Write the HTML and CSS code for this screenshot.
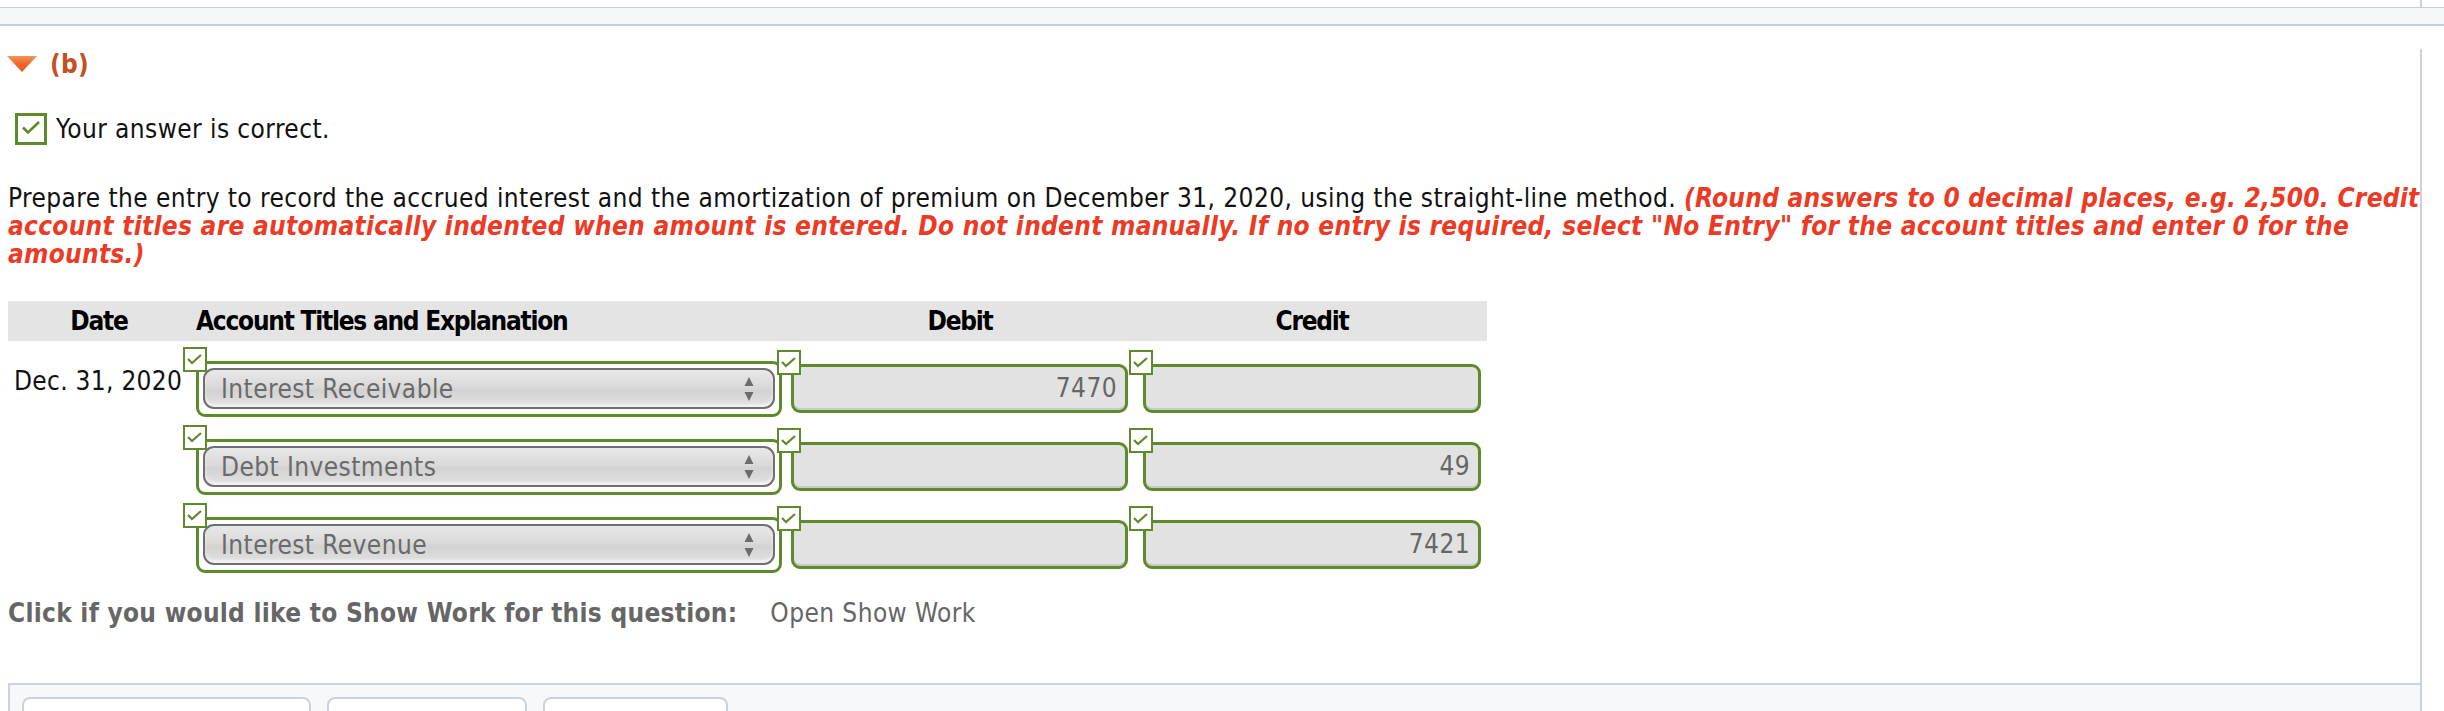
FILE: index.html
```html
<!DOCTYPE html>
<html lang="en">
<head>
<meta charset="utf-8">
<title>Part (b)</title>
<link rel="stylesheet" href="styles.css">
</head>
<body>
<div class="frame-top"></div>
<div class="topbar"></div>
<div class="main">
  <section class="part">
    <h2 class="part-title"><span class="caret"></span><span class="part-label">(b)</span></h2>

    <div class="status">
      <span class="bigcheck"><svg width="26" height="26" viewBox="0 0 26 26"><path d="M5 11.5 L10 16.5 L21 6" fill="none" stroke="#5f8a2b" stroke-width="2.6"/></svg></span>
      <span class="status-text">Your answer is correct.</span>
    </div>

    <p class="prompt">Prepare the entry to record the accrued interest and the amortization of premium on December 31, 2020, using the straight-line method. <em class="note">(Round answers to 0 decimal places, e.g. 2,500. Credit account titles are automatically indented when amount is entered. Do not indent manually. If no entry is required, select "No Entry" for the account titles and enter 0 for the amounts.)</em></p>

    <div class="journal">
      <div class="jhead">
        <div class="h-date">Date</div>
        <div class="h-acct">Account Titles and Explanation</div>
        <div class="h-amt">Debit</div>
        <div class="h-amt h-credit">Credit</div>
      </div>

      <div class="jrow">
        <div class="c-date">Dec. 31, 2020</div>
        <div class="c-acct">
          <span class="tick"><svg width="20" height="21" viewBox="0 0 20 21"><path d="M3 10 L7 14 L16 6" fill="none" stroke="#5f8a2b" stroke-width="2.2"/></svg></span>
          <div class="sel-wrap"><div class="select"><span>Interest Receivable</span><svg class="arrows" width="10" height="26" viewBox="0 0 10 26"><path d="M5 1 L9.5 10 L0.5 10 Z M0.5 16 L9.5 16 L5 25 Z" fill="#6c6c6c"/></svg></div></div>
        </div>
        <div class="c-amt">
          <span class="tick tick-amt"><svg width="20" height="21" viewBox="0 0 20 21"><path d="M3 10 L7 14 L16 6" fill="none" stroke="#5f8a2b" stroke-width="2.2"/></svg></span>
          <div class="amt">7470</div>
        </div>
        <div class="c-amt c-credit">
          <span class="tick tick-amt"><svg width="20" height="21" viewBox="0 0 20 21"><path d="M3 10 L7 14 L16 6" fill="none" stroke="#5f8a2b" stroke-width="2.2"/></svg></span>
          <div class="amt"></div>
        </div>
      </div>

      <div class="jrow">
        <div class="c-date"></div>
        <div class="c-acct">
          <span class="tick"><svg width="20" height="21" viewBox="0 0 20 21"><path d="M3 10 L7 14 L16 6" fill="none" stroke="#5f8a2b" stroke-width="2.2"/></svg></span>
          <div class="sel-wrap"><div class="select"><span>Debt Investments</span><svg class="arrows" width="10" height="26" viewBox="0 0 10 26"><path d="M5 1 L9.5 10 L0.5 10 Z M0.5 16 L9.5 16 L5 25 Z" fill="#6c6c6c"/></svg></div></div>
        </div>
        <div class="c-amt">
          <span class="tick tick-amt"><svg width="20" height="21" viewBox="0 0 20 21"><path d="M3 10 L7 14 L16 6" fill="none" stroke="#5f8a2b" stroke-width="2.2"/></svg></span>
          <div class="amt"></div>
        </div>
        <div class="c-amt c-credit">
          <span class="tick tick-amt"><svg width="20" height="21" viewBox="0 0 20 21"><path d="M3 10 L7 14 L16 6" fill="none" stroke="#5f8a2b" stroke-width="2.2"/></svg></span>
          <div class="amt">49</div>
        </div>
      </div>

      <div class="jrow">
        <div class="c-date"></div>
        <div class="c-acct">
          <span class="tick"><svg width="20" height="21" viewBox="0 0 20 21"><path d="M3 10 L7 14 L16 6" fill="none" stroke="#5f8a2b" stroke-width="2.2"/></svg></span>
          <div class="sel-wrap"><div class="select"><span>Interest Revenue</span><svg class="arrows" width="10" height="26" viewBox="0 0 10 26"><path d="M5 1 L9.5 10 L0.5 10 Z M0.5 16 L9.5 16 L5 25 Z" fill="#6c6c6c"/></svg></div></div>
        </div>
        <div class="c-amt">
          <span class="tick tick-amt"><svg width="20" height="21" viewBox="0 0 20 21"><path d="M3 10 L7 14 L16 6" fill="none" stroke="#5f8a2b" stroke-width="2.2"/></svg></span>
          <div class="amt"></div>
        </div>
        <div class="c-amt c-credit">
          <span class="tick tick-amt"><svg width="20" height="21" viewBox="0 0 20 21"><path d="M3 10 L7 14 L16 6" fill="none" stroke="#5f8a2b" stroke-width="2.2"/></svg></span>
          <div class="amt">7421</div>
        </div>
      </div>
    </div>

    <div class="showwork">
      <span class="sw-label">Click if you would like to Show Work for this question:</span>
      <span class="sw-link">Open Show Work</span>
    </div>
  </section>

  <div class="toolbar">
    <button class="tbtn">SHOW LIST OF ACCOUNTS</button>
    <button class="tbtn">SHOW SOLUTION</button>
    <button class="tbtn">SHOW ANSWER</button>
  </div>
</div>
</body>
</html>
```

FILE: styles.css
```css
html, body {
  margin: 0;
  padding: 0;
  background: #ffffff;
}
body {
  font-family: "DejaVu Sans Condensed", "DejaVu Sans", sans-serif;
  font-stretch: condensed;
  font-size: 26px;
  line-height: 28px;
  letter-spacing: 0.42px;
  color: #111111;
  overflow: hidden;
  height: 711px;
}
.frame-top {
  width: 2420px;
  height: 7px;
  border-right: 2px solid #c9d1d9;
}
.topbar {
  height: 16px;
  background: #f5f7f9;
  border-top: 1px solid #c6cfd8;
  border-bottom: 2px solid #c6cfd8;
}
.main {
  width: 2420px;
  border-right: 2px solid #c9d1d9;
  height: 700px;
}
.part {
  padding-left: 8px;
}
.part-title {
  margin: 23px 0 0 0;
  display: flex;
  align-items: center;
  height: 30px;
  font-size: 26px;
  font-weight: bold;
  line-height: 30px;
  letter-spacing: 0.3px;
}
.caret {
  width: 30px;
  height: 16px;
  margin-left: -1px;
  background: linear-gradient(#f59458 0%, #f06a2c 45%, #e9541c 100%);
  clip-path: polygon(0 0, 100% 0, 50% 100%);
}
.part-label {
  margin-left: 13px;
  color: #c44f1f;
}
.status {
  margin-top: 34px;
  display: flex;
  align-items: center;
  height: 32px;
}
.bigcheck {
  width: 26px;
  height: 26px;
  margin-left: 7px;
  border: 3px solid #5f8a2b;
  background: #fff;
  display: flex;
}
.status-text {
  margin-left: 9px;
  color: #111;
}
.prompt {
  margin: 39px 0 0 0;
  width: 2413px;
  color: #111;
  line-height: 28px;
}
.note {
  color: #ec3a25;
  font-weight: bold;
  font-style: italic;
  letter-spacing: 0.27px;
}
.journal {
  margin-top: 33px;
  width: 1479px;
}
.jhead {
  display: grid;
  grid-template-columns: 175px 594px 352px 358px;
  height: 40px;
  background: #e4e4e4;
  font-weight: bold;
  letter-spacing: -1.25px;
  align-items: center;
  color: #000;
}
.h-date {
  text-align: center;
  padding-left: 7px;
}
.h-acct {
  padding-left: 13px;
}
.h-amt {
  text-align: center;
  padding-left: 14px;
}
.h-credit {
  padding-right: 6px;
}
.jrow {
  display: grid;
  grid-template-columns: 175px 594px 352px 358px;
  height: 78px;
}
.jhead + .jrow {
  margin-top: 6px;
}
.c-date {
  padding: 20px 0 0 6px;
  color: #111;
  letter-spacing: 0.3px;
}
.c-acct, .c-amt {
  position: relative;
}
.tick {
  position: absolute;
  left: 0;
  top: 0;
  z-index: 2;
  width: 20px;
  height: 21px;
  border: 2px solid #5f8a2b;
  background: #fff;
  display: flex;
}
.tick-amt {
  top: 3px;
}
.sel-wrap {
  margin: 14px 0 0 13px;
  width: 572px;
  height: 44px;
  border: 3px solid #5f8a2b;
  border-radius: 9px;
  padding: 4px 4px 2px 4px;
  background: #fff;
}
.select {
  height: 37px;
  border: 2px solid #6f6f6f;
  border-radius: 11px;
  background: linear-gradient(#e8e8e8 0%, #dadada 45%, #d2d2d2 55%, #e2e2e2 100%);
  box-shadow: inset 0 -3px 3px rgba(255,255,255,0.6);
  display: flex;
  align-items: center;
  justify-content: space-between;
  padding: 0 19px 0 16px;
  color: #6a6a6a;
}
.arrows {
  flex: none;
}
.c-amt .amt {
  margin: 17px 0 0 14px;
  width: 323px;
  height: 43px;
  border: 3px solid #5f8a2b;
  border-radius: 9px;
  background: #e2e2e2;
  box-shadow: inset 0 -2px 0 #c9c9c9;
  text-align: right;
  padding-right: 8px;
  line-height: 43px;
  color: #666;
  box-sizing: content-box;
  padding-left: 0;
}
.c-credit .amt {
  width: 324px;
}
.showwork {
  margin-top: 18px;
  display: flex;
  align-items: center;
  height: 28px;
  color: #666;
}
.sw-label {
  font-weight: bold;
  letter-spacing: 0.27px;
}
.sw-link {
  margin-left: 33px;
}
.toolbar {
  margin: 56px 0 0 8px;
  border-top: 2px solid #ccd3da;
  border-left: 2px solid #ccd3da;
  background: #f6f8fa;
  height: 100px;
  padding: 12px 0 0 12px;
  display: flex;
  gap: 16px;
  align-items: flex-start;
}
.tbtn {
  font-family: "DejaVu Sans Condensed", "DejaVu Sans", sans-serif;
  font-stretch: condensed;
  font-size: 19.5px;
  font-weight: bold;
  letter-spacing: 0;
  color: #2a5680;
  background: #fff;
  border: 2px solid #c9d3dd;
  border-radius: 8px;
  height: 44px;
  padding: 0 14px 0 14px;
  line-height: 30px;
  text-align: left;
  vertical-align: top;
}
```
